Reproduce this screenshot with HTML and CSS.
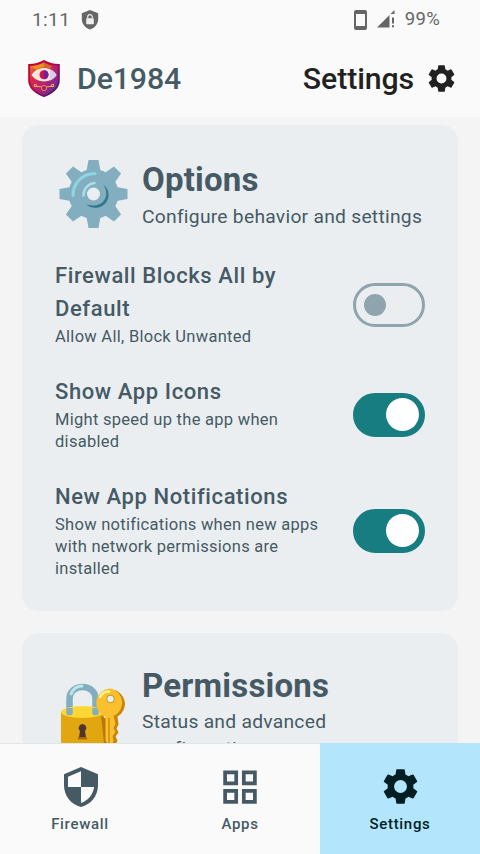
FILE: index.html
```html
<!DOCTYPE html>
<html lang="en">
<head>
<meta charset="utf-8">
<title>De1984</title>
<link rel="stylesheet" href="styles.css">
</head>
<body>
<svg width="0" height="0" class="defs">
  <symbol id="cog" viewBox="0 0 24 24"><path d="M19.14 12.94c.04-.3.06-.61.06-.94s-.02-.64-.07-.94l2.03-1.58a.49.49 0 0 0 .12-.61l-1.92-3.32a.49.49 0 0 0-.59-.22l-2.39.96a7 7 0 0 0-1.62-.94l-.36-2.54a.48.48 0 0 0-.48-.41h-3.84a.47.47 0 0 0-.47.41l-.36 2.54c-.59.24-1.13.57-1.62.94l-2.39-.96a.48.48 0 0 0-.59.22L2.74 8.87a.47.47 0 0 0 .12.61l2.03 1.58a6 6 0 0 0 0 1.88l-2.03 1.58a.49.49 0 0 0-.12.61l1.92 3.32c.12.22.37.29.59.22l2.39-.96c.5.38 1.03.7 1.62.94l.36 2.54c.05.24.24.41.48.41h3.84c.24 0 .44-.17.47-.41l.36-2.54a7 7 0 0 0 1.62-.94l2.39.96c.22.08.47 0 .59-.22l1.92-3.320a.47.47 0 0 0-.12-.61zM12 15.600a3.600 3.600 0 1 1 0-7.200 3.600 3.600 0 0 1 0 7.200z"/></symbol>
</svg>
<div class="screen">
  <div class="status">
    <span class="clock">1:11</span>
    <svg class="status-shield" viewBox="0 0 18 20"><path fill="#666" d="M9 0 17.200 3.200V9c0 5-3.300 9-8.200 10.500C4.100 18 .8 14 .8 9V3.200z"/><rect x="5.200" y="8.300" width="7.600" height="6" rx=".7" fill="#eee"/><path d="M6.700 8.500V7a2.300 2.300 0 0 1 4.600 0v1.500" fill="none" stroke="#eee" stroke-width="1.200"/></svg>
    <span class="grow"></span>
    <svg class="status-phone" viewBox="0 0 13 20"><path fill="#666" fill-rule="evenodd" d="M2 0h9a2 2 0 0 1 2 2v16a2 2 0 0 1-2 2H2a2 2 0 0 1-2-2V2a2 2 0 0 1 2-2zM2 4v12h9V4z"/></svg>
    <svg class="status-signal" viewBox="0 0 18 18"><path fill="#666" d="M0 17.500 12.500 5v12.500zM13.500 4 17.500 0v4zM15 7.500h2v6h-2zM15 15.300h2v2h-2z"/></svg>
    <span class="battery">99%</span>
  </div>
  <header class="topbar">
    <svg class="logo" viewBox="0 0 32 37">
      <defs><linearGradient id="lg" x1="0" y1="0" x2="1" y2="1"><stop offset="0" stop-color="#e5a03a"/><stop offset=".3" stop-color="#d92c48"/><stop offset=".6" stop-color="#b0207c"/><stop offset="1" stop-color="#3c3aa0"/></linearGradient>
      <linearGradient id="le" x1="0" y1="0" x2="1" y2="1"><stop offset="0" stop-color="#c8001f"/><stop offset=".45" stop-color="#b3094c"/><stop offset="1" stop-color="#30217c"/></linearGradient></defs>
      <path fill="url(#lg)" stroke="url(#le)" stroke-width="2" d="M16 1.200C12 3.500 6 5 1.200 5v15c0 8 6.800 13 14.800 16 8-3 14.800-8 14.800-16V5C26 5 20 3.500 16 1.200z"/>
      <path fill="#eda019" d="M16 2.800C12 4.800 8 5.900 4 6.400l4 3.600c3-2 5-2.500 8-2.500z" opacity=".85"/>
      <path fill="#d4682a" d="M16 2.800c3 1.500 5 2.500 8 3.200l-2 3c-2-1-4-1.500-6-1.500z"/>
      <path fill="#fbe6d8" d="M3.500 15C9 5.500 23 5.500 28.500 15 23 23.500 9 23.500 3.500 15z"/>
      <path fill="#d9cdec" d="M22 9.500c3 1.300 5 3.200 6.500 5.500-1.500 2.300-3.500 4.200-6.500 5.500z"/>
      <circle cx="16" cy="14.700" r="4.500" fill="#d0134f"/><path fill="#70209a" d="M16 10.200a4.500 4.500 0 0 1 0 9z"/>
      <path d="M11.500 26.500H9l-1-2H6.500v2H9M20.500 26.500H23l1-2h1.500v2H23M11 26.700h10" fill="none" stroke="#eba552" stroke-width="1.100"/>
      <circle cx="16" cy="28" r="2.600" fill="#a61b65" stroke="#ea8b55"/>
    </svg>
    <span class="brand">De1984</span>
    <span class="grow"></span>
    <span class="page-title">Settings</span>
    <svg class="top-cog"><use href="#cog"/></svg>
  </header>
  <main class="content">
    <section class="card">
      <div class="card-head">
        <svg class="emoji" viewBox="0 0 76 78">
          <g fill="#82aec0"><circle cx="38.500" cy="39" r="25"/>
            <path id="t" d="M33.500 5h10l2.500 14h-15z"/><use href="#t" transform="rotate(45 38.500 39)"/><use href="#t" transform="rotate(90 38.500 39)"/><use href="#t" transform="rotate(135 38.500 39)"/><use href="#t" transform="rotate(180 38.500 39)"/><use href="#t" transform="rotate(225 38.500 39)"/><use href="#t" transform="rotate(270 38.500 39)"/><use href="#t" transform="rotate(315 38.500 39)"/></g>
          <path d="M18 40.500c0-12 9-22 22-22" fill="none" stroke="#8fd4e3" stroke-width="3.200" stroke-linecap="round"/>
          <path d="M28.500 40.500c0-6.500 4.500-12 11-12.500" fill="none" stroke="#a9dfe5" stroke-width="2.500" stroke-linecap="round"/>
          <path d="M48.500 30C56 41 48 54.500 31 49.500 40 56.500 53.500 52 53.500 39.500c0-4-2-7.500-5-9.500z" fill="#2f7889"/>
          <circle cx="38.500" cy="39" r="6.500" fill="#ebeef1"/>
        </svg>
        <div class="heading"><h2>Options</h2><p>Configure behavior and settings</p></div>
      </div>
      <div class="row first"><div class="text"><h3>Firewall Blocks All by Default</h3><p>Allow All, Block Unwanted</p></div><span class="switch"></span></div>
      <div class="row"><div class="text"><h3>Show App Icons</h3><p>Might speed up the app when disabled</p></div><span class="switch on"></span></div>
      <div class="row"><div class="text"><h3>New App Notifications</h3><p>Show notifications when new apps with network permissions are installed</p></div><span class="switch on"></span></div>
    </section>
    <section class="card second">
      <div class="card-head">
        <svg class="emoji lock" viewBox="0 0 76 78">
          <path d="M14.500 36V24c0-16 26-16 26 0v12" fill="none" stroke="#82aec0" stroke-width="6.500"/>
          <path d="M16 19c2-5 6-8 11-8" fill="none" stroke="#b9e4ea" stroke-width="3" stroke-linecap="round"/>
          <path d="M6 37h43v31q-21.500 6-43 0z" fill="#e2a610"/>
          <ellipse cx="27.500" cy="37" rx="21.500" ry="6" fill="#fdd835"/>
          <path d="M11.300 33v5.500a3.200 1.800 0 0 0 6.400 0V33zM37.300 33v5.500a3.200 1.800 0 0 0 6.400 0V33z" fill="#82aec0"/>
          <path d="M27.500 49a4 4 0 0 1 2.500 7l1 6.500h-7l1-6.500a4 4 0 0 1 2.500-7z" fill="#4e342e"/>
          <path d="M23 62h9v2.500h-9z" fill="#a66c0a"/>
          <path d="M46 41l3 27 3 0V44z" fill="#b9770e"/>
          <path d="M56 14a14.500 14.500 0 0 0-6 27.500V67l5 5 4-2 2-5-2-4 3-4-2-4 2-4-1-8A14.500 14.500 0 0 0 56 14z" fill="#c98508" transform="translate(1.500 .500)"/>
          <path d="M55.500 13.500a14.500 14.500 0 0 0-5 28V66l4 5 3-2 1-4-1-4 3-4-2-4 2-4-2-8A14.500 14.500 0 0 0 55.500 13.500z" fill="#fbc02d"/>
          <path d="M45 22c2-4 5-5.500 9-5.500" fill="none" stroke="#fff59d" stroke-width="2.500" stroke-linecap="round"/>
          <path d="M54 43v26" stroke="#d39412" stroke-width="1.700"/>
          <circle cx="55.500" cy="24" r="3.800" fill="#ebeef1" stroke="#b9800d" stroke-width=".8"/>
        </svg>
        <div class="heading"><h2>Permissions</h2><p>Status and advanced configuration</p></div>
      </div>
    </section>
  </main>
  <nav class="nav">
    <div class="tab"><svg class="shield" viewBox="0 0 34 40"><path fill="#455a64" fill-rule="evenodd" d="M17 0 34 7.300v11.200C34 28.700 26.800 37.700 17 40 7.200 37.700 0 28.700 0 18.500V7.300zM17 4.200 4 9.800V20h13zM17 20v16c7-2.200 12.200-8.700 13.100-16z"/></svg><span>Firewall</span></div>
    <div class="tab"><svg viewBox="0 0 34 40"><path fill="none" stroke="#455a64" stroke-width="3.700" d="M2.100 5.300h11.100v11.100H2.100zM20.800 5.300h11.100v11.100H20.800zM2.100 23.800h11.100v11.100H2.100zM20.800 23.800h11.100v11.100H20.800z"/></svg><span>Apps</span></div>
    <div class="tab active"><svg class="nav-cog"><use href="#cog"/></svg><span>Settings</span></div>
  </nav>
</div>
</body>
</html>
```
FILE: styles.css
```css
* { box-sizing: border-box; }
body, h2, h3, p { margin: 0; }
body { font-family: Roboto, sans-serif; color: #455a64; background: #f4f4f4; }
.defs { display: block; position: absolute; }
.screen { height: 854px; display: flex; flex-direction: column; overflow: hidden; }
.grow { flex: 1; }
.status { height: 39px; flex: none; display: flex; align-items: center; padding: 0 40px 0 32px; background: #fafafa; color: #666; font-size: 19.250px; letter-spacing: .3px; }
.clock { width: 49px; }
.status-shield { width: 18px; height: 20px; }
.status-phone { width: 13px; height: 20px; margin-right: 10px; }
.status-signal { width: 18px; height: 18px; margin: -1px 10px 0 0; }
.battery { font-size: 18.500px; line-height: 20px; margin-top: -1px; }
.topbar { height: 78px; flex: none; display: flex; align-items: center; padding: 0 22px 0 28px; background: #fafafa; }
.logo { width: 32px; height: 37px; margin-right: 17px; }
.brand, .page-title { font-size: 30.250px; font-weight: 500; letter-spacing: -.1px; }
.page-title { color: #212121; }
.top-cog { width: 33px; height: 33px; margin-left: 11px; fill: #212121; }
.content { flex: 1; min-height: 0; overflow: hidden; padding: 8px 22px 0; }
.card { background: #ebeef1; border-radius: 16.500px; padding: 33px 33px 32px; margin-bottom: 22px; }
.card-head { display: flex; align-items: flex-start; height: 101px; }
.emoji { width: 76px; height: 78px; flex: none; margin: -3px 11px 0 0; }
.heading { flex: 1; }
.heading h2 { font-size: 33px; line-height: 44px; font-weight: 700; letter-spacing: .2px; }
.heading p { font-size: 19.250px; line-height: 27.500px; letter-spacing: .26px; position: relative; top: 1px; }
.row { display: flex; align-items: center; justify-content: space-between; margin-bottom: 28px; }
.row:last-child { margin-bottom: 0; }
.text { width: 276px; }
.row h3 { font-size: 22px; line-height: 33px; font-weight: 500; letter-spacing: .6px; }
.row p { font-size: 16.500px; line-height: 22px; letter-spacing: .28px; position: relative; top: 1px; }
.switch { width: 72px; height: 44px; border: 3px solid #90a4ae; border-radius: 22px; display: flex; align-items: center; padding-left: 8px; position: relative; top: 1px; }
.first .switch { top: 2px; }
.switch::before { content: ""; width: 22px; height: 22px; border-radius: 50%; background: #90a4ae; }
.switch.on { background: #177d80; border-color: #177d80; justify-content: flex-end; padding: 0 3px 0 0; }
.switch.on::before { width: 33px; height: 33px; background: #fff; }
.second { padding-top: 31px; }
.second .card-head { height: 130px; }
.second .heading p { line-height: 26.500px; }
.lock { margin-top: 11px; }
.nav { height: 111px; flex: none; display: flex; background: #fafafa; border-top: 1px solid #e3e6e8; }
.tab { flex: 1; display: flex; flex-direction: column; align-items: center; padding-top: 23px; font-size: 15px; font-weight: 500; letter-spacing: .7px; line-height: 20px; }
.tab svg { width: 34px; height: 40px; margin-bottom: 7px; }
.tab .shield { margin-left: 2px; }
.tab .nav-cog { width: 43px; height: 43px; margin: -2px 0 6px; fill: #001f24; }
.tab.active { background: #b3e5fc; color: #001f24; margin-top: -1px; padding-top: 24px; }
```
